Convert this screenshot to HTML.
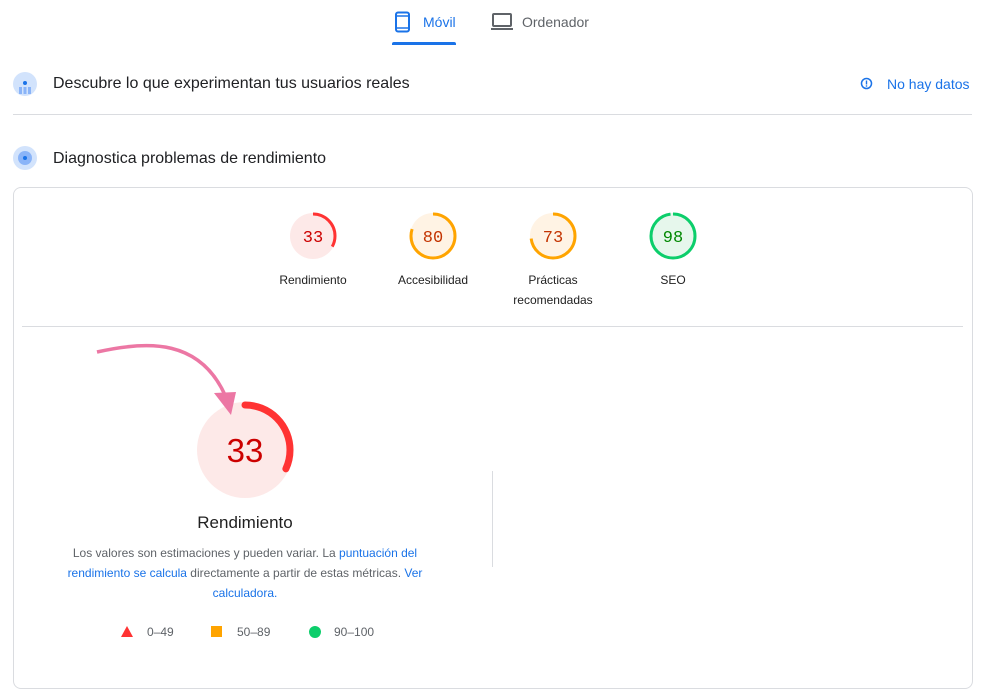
<!DOCTYPE html>
<html><head><meta charset="utf-8"><style>
body{margin:0;width:985px;height:671px;background:#fff;font-family:"Liberation Sans",Arial,sans-serif;position:relative;overflow:hidden;color:#202124}
.a{position:absolute}
.g{position:absolute;text-align:center;font-size:12px;color:#212121;line-height:20px}
a{color:#1a73e8;text-decoration:none}
</style></head><body>
<svg class="a" style="left:393px;top:11px" width="20" height="22" viewBox="0 0 20 22"><rect x="3" y="1.5" width="13" height="19" rx="2" fill="none" stroke="#1a73e8" stroke-width="2"/><line x1="3" y1="5" x2="16" y2="5" stroke="#1a73e8" stroke-width="1.5"/><line x1="3" y1="17" x2="16" y2="17" stroke="#1a73e8" stroke-width="1.5"/></svg>
<div class="a" style="left:423px;top:14px;font-size:14px;color:#1a73e8">Móvil</div>
<div class="a" style="left:392px;top:42px;width:64px;height:3px;background:#1a73e8;border-radius:2px 2px 0 0"></div>
<svg class="a" style="left:490px;top:13px" width="24" height="18" viewBox="0 0 24 18"><rect x="3" y="1" width="18" height="12" rx="1" fill="none" stroke="#5f6368" stroke-width="2"/><rect x="1" y="15" width="22" height="2" fill="#5f6368"/></svg>
<div class="a" style="left:522px;top:14px;font-size:14px;color:#5f6368">Ordenador</div>
<div class="a" style="left:13px;top:72px;width:24px;height:24px;border-radius:50%;background:#d2e3fc"></div>
<div class="a" style="left:23px;top:81px;width:4px;height:4px;border-radius:50%;background:#1a73e8"></div>
<div class="a" style="left:19px;top:87px;width:12px;height:7px;background:repeating-linear-gradient(90deg,#8ab4f8 0 3px,transparent 3px 4.5px)"></div>
<div class="a" style="left:53px;top:75px;font-size:16px">Descubre lo que experimentan tus usuarios reales</div>
<svg class="a" style="left:860px;top:77px" width="13" height="13" viewBox="0 0 13 13"><circle cx="6.5" cy="6.5" r="5" fill="none" stroke="#1a73e8" stroke-width="1.5"/><rect x="5.8" y="3.5" width="1.4" height="4" fill="#1a73e8"/><rect x="5.8" y="8.3" width="1.4" height="1.4" fill="#1a73e8"/></svg>
<div class="a" style="left:887px;top:76px;font-size:14px;color:#1a73e8">No hay datos</div>
<div class="a" style="left:13px;top:114px;width:959px;height:1px;background:#dadce0"></div>
<div class="a" style="left:13px;top:146px;width:24px;height:24px;border-radius:50%;background:#d2e3fc"></div>
<div class="a" style="left:18px;top:151px;width:14px;height:14px;border-radius:50%;background:#8ab4f8"></div>
<div class="a" style="left:23px;top:156px;width:4px;height:4px;border-radius:50%;background:#1a73e8"></div>
<div class="a" style="left:53px;top:150px;font-size:16px">Diagnostica problemas de rendimiento</div>
<div class="a" style="left:13px;top:187px;width:958px;height:500px;border:1px solid #dadce0;border-radius:8px"></div>
<div class="a" style="left:22px;top:326px;width:941px;height:1px;background:#dadce0"></div>
<div class="a" style="left:492px;top:471px;width:1px;height:96px;background:#dadce0"></div>
<svg class="a" style="left:288px;top:211px" width="50" height="50" viewBox="0 0 50 50"><circle cx="25" cy="25" r="23" fill="#fde9e8"/><circle cx="25" cy="25" r="22" fill="none" stroke="#ff3333" stroke-width="3" stroke-dasharray="45.6 200" transform="rotate(-90 25 25)"/><text x="25" y="31" text-anchor="middle" font-family="Liberation Mono,monospace" font-size="17" fill="#c00">33</text></svg>
<svg class="a" style="left:408px;top:211px" width="50" height="50" viewBox="0 0 50 50"><circle cx="25" cy="25" r="23" fill="#fff3e4"/><circle cx="25" cy="25" r="22" fill="none" stroke="#ffa400" stroke-width="3" stroke-dasharray="110.6 200" transform="rotate(-90 25 25)"/><text x="25" y="31" text-anchor="middle" font-family="Liberation Mono,monospace" font-size="17" fill="#c33300">80</text></svg>
<svg class="a" style="left:528px;top:211px" width="50" height="50" viewBox="0 0 50 50"><circle cx="25" cy="25" r="23" fill="#fff3e4"/><circle cx="25" cy="25" r="22" fill="none" stroke="#ffa400" stroke-width="3" stroke-dasharray="100.9 200" transform="rotate(-90 25 25)"/><text x="25" y="31" text-anchor="middle" font-family="Liberation Mono,monospace" font-size="17" fill="#c33300">73</text></svg>
<svg class="a" style="left:648px;top:211px" width="50" height="50" viewBox="0 0 50 50"><circle cx="25" cy="25" r="23" fill="#e6f7ec"/><circle cx="25" cy="25" r="22" fill="none" stroke="#0cce6b" stroke-width="3" stroke-dasharray="135.5 200" transform="rotate(-90 25 25)"/><text x="25" y="31" text-anchor="middle" font-family="Liberation Mono,monospace" font-size="17" fill="#080">98</text></svg>
<div class="g" style="left:263px;top:270px;width:100px">Rendimiento</div>
<div class="g" style="left:383px;top:270px;width:100px">Accesibilidad</div>
<div class="g" style="left:503px;top:270px;width:100px">Prácticas<br>recomendadas</div>
<div class="g" style="left:623px;top:270px;width:100px">SEO</div>
<svg class="a" style="left:195px;top:400px" width="100" height="100" viewBox="0 0 100 100"><circle cx="50" cy="50" r="48" fill="#fde9e8"/><circle cx="50" cy="50" r="45" fill="none" stroke="#ff3333" stroke-width="7" stroke-linecap="round" stroke-dasharray="90 400" transform="rotate(-90 50 50)"/><text x="50" y="62" text-anchor="middle" font-family="Liberation Sans,sans-serif" font-size="33" fill="#c00">33</text></svg>
<svg class="a" style="left:90px;top:340px" width="160" height="80" viewBox="0 0 160 80"><path d="M7 12 C60 0 110 0 135 55" fill="none" stroke="#ec77a4" stroke-width="3.5"/><polygon points="124,53 146,52 141,75" fill="#ec77a4"/></svg>
<div class="a" style="left:145px;top:513px;width:200px;text-align:center;font-size:17px;color:#212121">Rendimiento</div>
<div class="a" style="left:60px;top:543px;width:370px;text-align:center;font-size:12px;line-height:20px;color:#5f6368">Los valores son estimaciones y pueden variar. La <a>puntuación del rendimiento se calcula</a> directamente a partir de estas métricas. <a>Ver calculadora.</a></div>
<svg class="a" style="left:120px;top:626px" width="14" height="12"><polygon points="7,0 13,11 1,11" fill="#ff3333"/></svg>
<div class="a" style="left:147px;top:625px;font-size:12px;color:#5f6368">0–49</div>
<div class="a" style="left:211px;top:626px;width:11px;height:11px;background:#ffa400"></div>
<div class="a" style="left:237px;top:625px;font-size:12px;color:#5f6368">50–89</div>
<div class="a" style="left:309px;top:626px;width:12px;height:12px;border-radius:50%;background:#0cce6b"></div>
<div class="a" style="left:334px;top:625px;font-size:12px;color:#5f6368">90–100</div>
</body></html>
